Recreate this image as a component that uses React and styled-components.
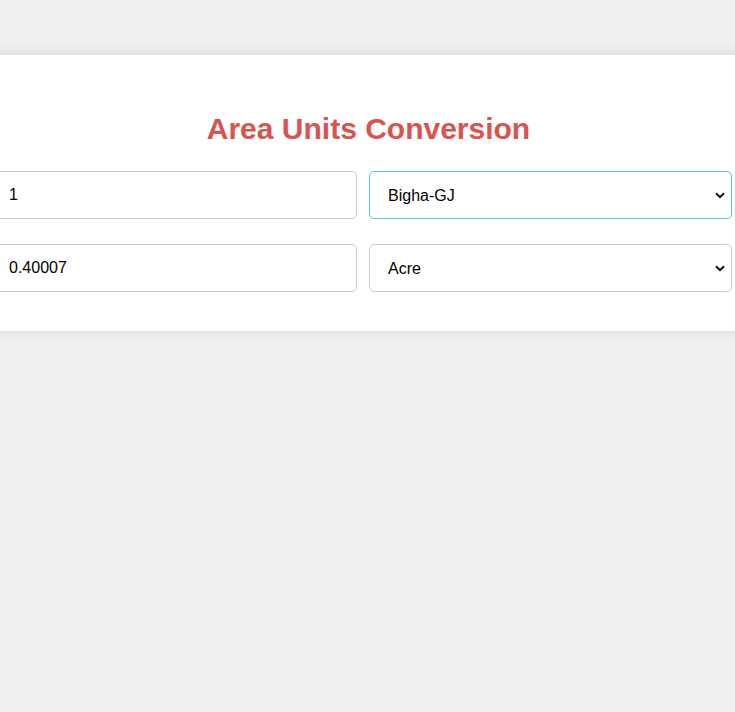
import React, { useState } from "react";
import styled, { createGlobalStyle } from "styled-components";

const GlobalStyle = createGlobalStyle`
  html, body {
    margin: 0;
    padding: 0;
    background: #efefef;
    overflow-x: hidden;
    font-family: "Liberation Sans", Arial, sans-serif;
  }
`;

const Page = styled.div`
  display: flex;
  justify-content: center;
  padding-top: 55px;
  min-height: 712px;
  box-sizing: border-box;
`;

const Card = styled.div`
  flex: 0 0 auto;
  width: 815px;
  box-sizing: border-box;
  padding: 56px 43px 39px 34px;
  background: #fff;
  box-shadow: 0 0 12px rgba(0, 0, 0, 0.1);
  align-self: flex-start;
`;

const Title = styled.h1`
  margin: 0 0 24px;
  padding-left: 11px;
  text-align: center;
  font-size: 30px;
  line-height: 36px;
  font-weight: bold;
  color: #d9534f;
`;

const Row = styled.div`
  display: grid;
  grid-template-columns: 363px 363px;
  column-gap: 12px;
  margin-bottom: ${(p) => (p.$last ? "0" : "25px")};
`;

const Field = styled.input`
  box-sizing: border-box;
  width: 100%;
  height: 48px;
  padding: 0 14px;
  border: 1px solid #ccc;
  border-radius: 5px;
  font-family: "Liberation Sans", Arial, sans-serif;
  font-size: 16px;
  color: #000;
  background: #fff;
  outline: none;
`;

const SelectWrap = styled.div`
  position: relative;
`;

const Select = styled.select`
  appearance: none;
  -webkit-appearance: none;
  box-sizing: border-box;
  width: 100%;
  height: 48px;
  padding: 0 30px 0 18px;
  border: 1px solid ${(p) => (p.$active ? "#5bc0de" : "#ccc")};
  border-radius: 5px;
  font-family: "Liberation Sans", Arial, sans-serif;
  font-size: 16px;
  color: #000;
  background: #fff;
  outline: none;
`;

const Chevron = styled.svg`
  position: absolute;
  right: 7px;
  top: 50%;
  width: 10px;
  height: 7px;
  margin-top: -3px;
  pointer-events: none;
`;

const units = ["Acre", "Bigha-GJ", "Hectare", "Square Feet", "Square Meter", "Guntha"];

const UnitSelect = ({ value, onChange, active }) => (
  <SelectWrap>
    <Select $active={active} value={value} onChange={(e) => onChange(e.target.value)}>
      {units.map((u) => (
        <option key={u}>{u}</option>
      ))}
    </Select>
    <Chevron viewBox="0 0 10 7">
      <path d="M1 1.2 L5 5.2 L9 1.2" fill="none" stroke="#111" strokeWidth="2" />
    </Chevron>
  </SelectWrap>
);

export default function App() {
  const [from, setFrom] = useState("Bigha-GJ");
  const [to, setTo] = useState("Acre");
  return (
    <>
      <GlobalStyle />
      <Page>
        <Card>
          <Title>Area Units Conversion</Title>
          <Row>
            <Field defaultValue="1" />
            <UnitSelect active value={from} onChange={setFrom} />
          </Row>
          <Row $last>
            <Field defaultValue="0.40007" />
            <UnitSelect value={to} onChange={setTo} />
          </Row>
        </Card>
      </Page>
    </>
  );
}
